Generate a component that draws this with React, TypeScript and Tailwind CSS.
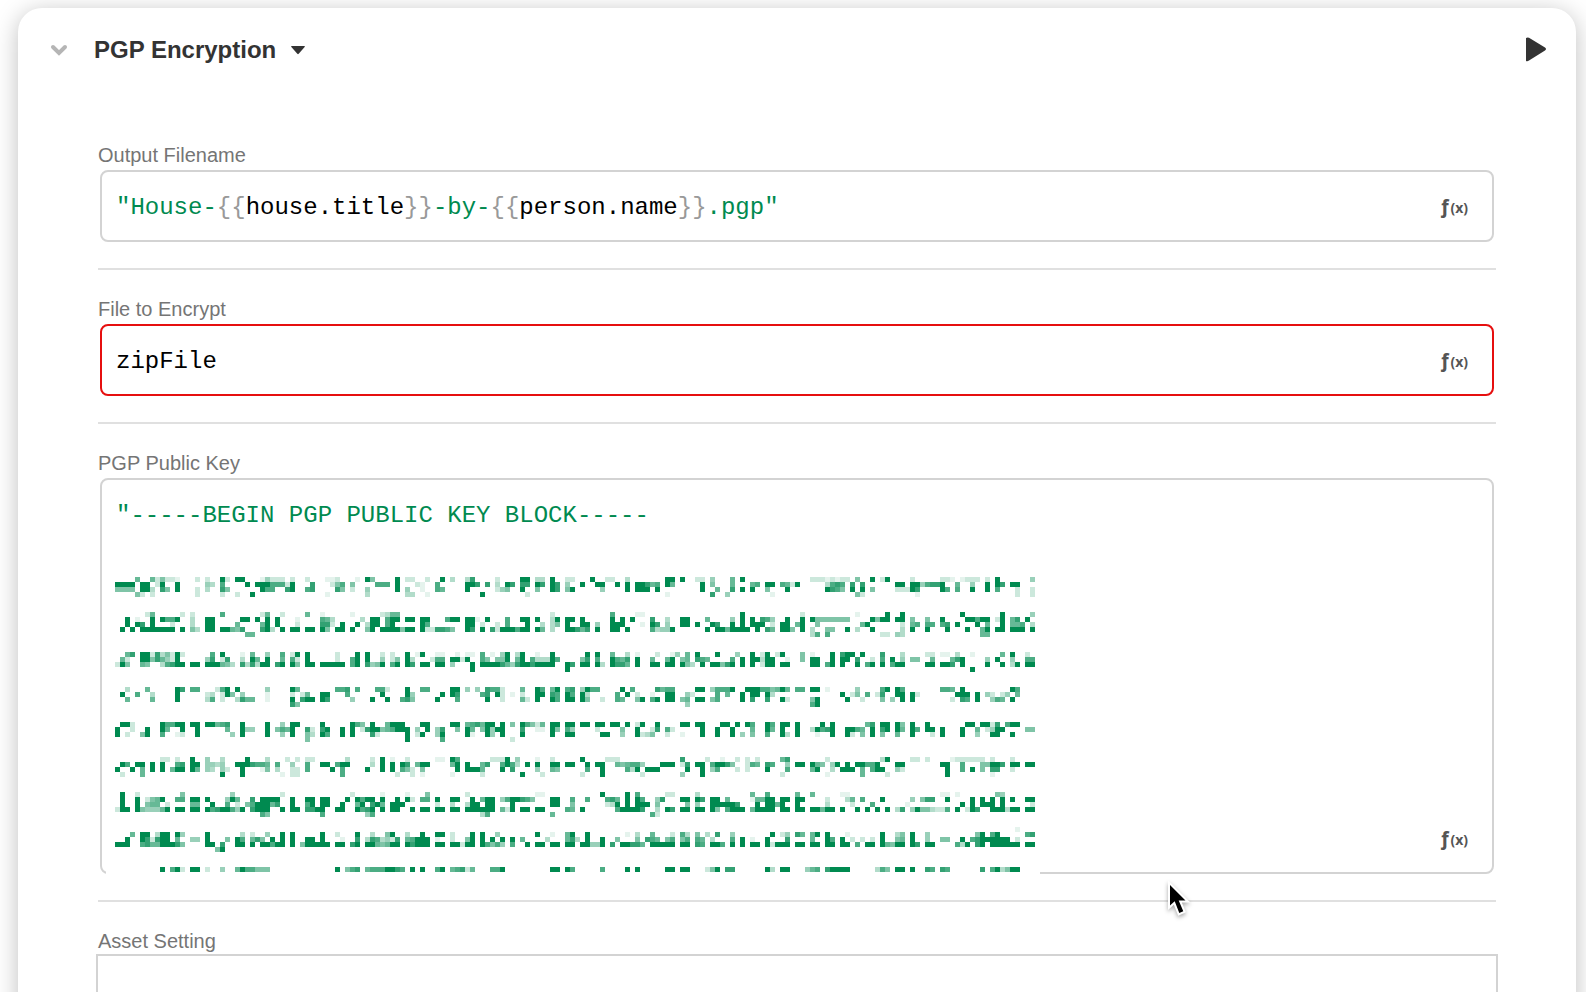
import React, { useState } from 'react';

// Redacted key body. Each row is [grid row, left part, middle part, right part],
// each part is a list of "column:levels" runs, 1 (faint) to 9 (solid).
const CELL = 5;
const PART_OFFSETS = [0, 61, 125];
const REDACTED: [number, string, string, string][] = [
  [0, '4:6 7:6 8:2 9:5 10:221 16:2 18:2 21:92 24:99 29:14222 35:2 38:2 42:11 44:2 48:1 50:95 56:9 58:22', '1:2 4:9 6:3 9:38 15:2 20:99 23:33 26:9 29:22 34:9 37:22 41:3 49:99 52:9 55:22 58:4 62:6', '0:9 14:22212 19:122 23:5 26:9 28:29 34:2 40:221 44:1222 49:2 51:9 58:4'],
  [1, '0:9999 5:99 8:29 12:9 18:43 21:7 26:9 28:9997772 35:9 39:8 43:257 47:5 52:777 56:9 60:2', '0:1 3:7 9:998 13:8 15:3 17:98 20:88 23:98 26:98 29:4 32:9 35:99 39:9 41:9 43:99867 49:96 56:9 58:5 62:6', '2:67 5:99 8:762 11:9 17:378 20:7 22:8 24:8 31:99 34:99 36:4788 40:9 43:6 46:4 49:9 51:98 54:99'],
  [2, '0:5555 5:993 9:85 12:9 16:2 18:3 21:85 29:977 34:89 38:78 44:85 47:2 50:4 56:9 58:4', '0:1 3:76 9:9 15:245 20:9 23:5 26:98 29:59 36:4 41:9 43:999 47:9 56:9 59:6 62:8 64:9', '0:7 2:9 5:5 9:9 17:987 20:5 22:9 24:9 26:5 31:222 34:98 40:97 43:7 46:9 49:9 51:7 55:2 58:2'],
  [3, '4:5 5:2 7:2 16:2 21:2 24:2 27:9 42:1 50:3 58:33', '1:1 12:9 21:2 49:1 58:8 61:4', '6:1 23:52 35:1 55:2 58:2'],
  [7, '6:26 13:2 15:2 21:7 29:26 33:2 38:6 41:1 47:1 53:2366', '26:2 38:7 43:11', '0:9 12:2 23:1 29:9 32:9 44:9 52:9 58:4'],
  [8, '2:9 4:1 7:9 9:977 12:9 15:3 18:99 25:99 28:9 30:9 32:9 36:1 41:76 43:3 49:3 51:99 54:79 56:9 58:99', '0:99 5:799 9:99 11:1 13:9 17:7 20:99 23:9 26:39 29:99 32:9 38:9 40:9 42:9 46:8 49:3 52:99 57:6 62:4', '0:9 2:9 4:87 6:4 9:9 12:9 14:95555555 26:9599 31:99 34:5 37:5 40:9 45:99 47:7 48:99 51:2 52:9 54:68 57:9'],
  [9, '2:9 4:98 7:9 11:2 15:3 18:99 24:6 29:69 32:9 36:2 41:882 45:9 48:9 50:399 54:79', '0:97 9:99 12:2 15:2 17:7 21:9 24:3 26:35 29:9 32:99 35:4 38:99 40:9 44:1 46:98 49:4 52:99 55:9 58:98 62:9', '0:9 2:999 6:2 8:99 11:69 15:5 24:69 32:2 34:67 37:77 40:78 43:9 47:9 49:6 52:9 54:667 58:3'],
  [10, '1:9 3:9 5:9999 8:4 9:999 13:9 15:53 18:99 21:99 23:658 29:89 31:3 33:9 35:99 38:99 41:95 44:99 47:9 50:59 53:9999 57:5 58:99', '0:9 1:22 3:8875 9:98 12:9 14:8299 18:9799 23:96 26:3 29:99 31:868 35:9 38:99 41:9 46:7344 50:9 57:9 59:9969 63:9', '0:99 3:9 5:86 8:99 12:9 10:5 14:3 17:55 21:9 23:3 26:9 32:3 34:9 37:9 41:9 45:9 48:69 51:99 54:99 56:9 58:9'],
  [11, '26:66', '', '14:37 17:7 28:22 31:43 48:66'],
  [15, '2:68 5:99 7:283 10:52 12:92 19:7 21:9 25:1 27:6 30:4 33:7 35:2 36:9 38:9 44:2 48:9 50:9 53:2 55:2 58:9 60:1', '0:9 3:11 7:1 9:11 12:7 14:1 16:49 19:39 23:1 26:9 33:9 35:9 38:6 41:3 43:1 47:2 50:14 53:6 55:9 59:9 63:4', '2:9 4:29 7:29 12:5 14:1 18:9 20:899 24:9 28:8 32:3 37:22 40:11 43:3 46:1 52:6 54:9 57:2'],
  [16, '1:62 5:99 7:58 9:642 12:9 18:48 21:28 25:3 27:96 30:9 33:6 35:72 38:9 44:2 47:79 50:9 53:4 55:25 58:93', '2:277 6:99 8:29 12:75 15:559 19:69 22:733 25:39 27:7 32:58 35:7 38:9768 43:9 46:6 49:69 52:56 55:876 62:7', '0:9 2:99 4:399 9:1 12:5 14:99 18:9 20:99 23:8 26:2 28:7 30:9 32:4 34:55 38:6 42:689 49:4 51:9 54:4 57:77'],
  [17, '0:2 1:95 5:65 9:37 11:899 15:99 18:999 21:653 25:83 27:83 29:99 32:89 35:95 38:99 41:999 44:99 47:79 50:8459 55:79 58:98', '0:99 3:99 6:4 10:9 12:9999 16:8648 20:99 22:89999 29:98 32:99 35:93 38:9886 43:9 46:99 49:99 52:953 56:9 58:99 60:58 62:9', '0:9 2:9 4:299 8:99 14:99 17:79 20:9 23:9 25:79 28:9 30:79 32:9 37:99 40:998 44:9 49:9 52:9 54:39 57:99'],
  [18, '', '10:9 29:9', '46:9'],
  [22, '2:3 6:6 12:98 15:77 20:27 22:9 24:9 30:4 35:96 44:778 48:7 52:77 54:2 58:9', '0:77 6:99 9:4 11:4 13:877 16:2 20:6 23:97 26:69 29:78 32:4977 40:9 42:7 47:8677 55:99 58:47779', '1:9997 5:7564 8:96 11:77 14:99 17:1 23:4 28:79 31:97 40:776 44:9 54:97'],
  [23, '1:9 4:7 7:3 12:9 18:23 21:2 22:95 25:4 30:1 35:2 37:26 41:99 46:7 53:9 58:94', '4:9 6:98 12:78 15:92 18:1 20:2 23:99 26:87 29:97 32:93 39:7 41:9 43:2 46:1 49:99 53:42 59:7 61:6', '0:9 2:99 5:93 20:9 22:25 25:7 27:28 31:99 34:92 43:999 47:9 49:42 52:24 55:6'],
  [24, '2:6 7:6 12:9 18:37 21:2 24:386 27:6 30:1 35:9 37:899 41:98 47:4 51:9 54:9 57:785', '3:9 7:7 13:9 16:2 20:62 23:9 26:97 29:99 32:95 36:2 39:76 43:59 46:79 49:99 52:56 55:99 58:57', '0:9 2:8 5:8 8:92 14:59 21:9 24:2 28:5 30:4 32:9 34:9 42:2 44:87 47:9 50:476 54:9'],
  [25, '35:85', '53:4', '14:79'],
  [29, '1:992 9:97799 15:99 18:99678 25:9 30:9 33:4 35:99 41:9 47:975 51:9 54:6999 61:9', '0:99 6:99 9:678699 16:9 18:5 20:97 22:52 24:6 26:99 29:99 32:99 35:99 38:99 41:9 43:29 47:9 52:99 55:99 60:99 63:9', '1:97 5:97 8:99 11:9 16:9 18:9 25:68 28:99 31:95 34:9 37:9 45:99 48:99 50:28 53:79 55:9'],
  [30, '0:9 3:2 6:9 9:96 13:9 16:9 22:6 25:9 26:44 30:9 32:576 35:9 38:82 41:89 45:9 47:9 49:2899 53:56 55:7999 60:4', '1:9 3:48 7:5 9:96 12:5949 16:9 20:8 23:11 26:95 29:74 35:2 40:5 43:9 46:28 49:72 56:9 59:9 62:9', '2:6 5:96 8:9 11:9 14:39 16:78 18:9 21:99 23:76 26:9 28:89 31:96 34:97 37:99 40:9 44:9 47:6 49:2499 57:55'],
  [31, '0:9 2:2 5:59 9:7 12:1 13:2 16:9 23:4 25:9 30:9 33:4 35:9 38:53 41:97 45:9 47:9 51:82 58:9 60:29', '0:9 3:49 9:91 13:94 16:9 20:9 26:9 29:99 36:99 40:4 43:92 45:35 49:2 52:1 56:9 59:9 62:9', '0:4 2:5 5:7 8:93 11:9 15:1 18:9 21:92 24:5 26:9 28:5 31:6 34:9 38:2 40:9 44:9 47:4 50:99 54:9'],
  [32, '38:5 58:9', '4:7 18:2', ''],
  [36, '9:22 12:2 15:9 18:4 21:3 26:9 30:3 34:2 36:2 38:22 46:3 51:2 53:9 55:1 58:2', '3:11 6:97 14:222 17:9 19:4 23:1 26:2 32:9 37:222 52:8 57:2 60:1 63:2', '1:2 3:2 8:68 17:2 28:39 34:22 37:2 42:12222 47:22 50:2 54:2'],
  [37, '1:97 4:99 7:9 9:9 12:78 15:99 18:443 21:4 24:9998 28:776 32:7 35:4 38:7 41:99 44:799 51:3 53:9 55:9 57:98 60:6', '0:99 6:69 9:9 12:68 16:79 18:73 21:9 23:9 26:99 29:99 33:9 35:99 39:656774 48:999 52:28 55:99 58:79985', '1:276 5:87 9:4 11:99 14:965 18:49 21:9 23:99779 31:99 40:99 44:7 48:559 51:98 54:99 57:99'],
  [38, '0:9 3:9 5:6 7:9 9:9 11:699 15:96 18:43 21:42 25:9 29:15 32:3 35:22 38:7 43:9 45:7 50:9 53:9 55:9 57:75 59:2', '0:5 7:9 9:999 12:6 16:9 18:8 23:4 26:65 33:7 36:9 41:73 43:9 45:999 53:9 56:9 58:47 63:2', '1:2 5:9 9:7 14:69 18:3 20:999 24:6 26:79 28:9 31:42 41:9 44:7 46:9 48:5 50:88 54:2'],
  [39, '1:2 5:6 21:9 25:9 33:1 35:22 45:7 56:2 59:2', '0:1 6:1 12:2 20:9 24:2 32:2 36:9 44:2 52:4 56:9', '8:2 17:1 24:6 29:2 41:9 50:1'],
  [43, '1:9 4:2 13:5 23:4 33:2 47:2 53:1 58:1', '1:5 9:2 23:11 36:9 41:9 43:7 49:22 55:3', '2:6 5:7 11:6 14:6 20:11 40:11 43:1 51:54'],
  [44, '1:9 4:9 6:2569 12:77 15:99 18:9 22:49 24:6 27:8 29:999 32:9 35:9 38:99 41:99 46:9 48:97 50:99 53:9 56:9 58:92', '0:77 3:9 6:99 10:9 12:699 16:4799875 26:99 30:7 33:7 37:786 41:9 43:97 47:46 48:6 52:99 55:98 58:99 61:6', '2:1669 5:99 8:99 11:99 17:2 21:36 24:7 28:9 34:4 36:588 41:9 46:9 48:9 50:9 52:9 54:9 57:99'],
  [45, '1:9 4:9 6:566 10:2 15:66 19:9 22:7 24:2 26:579 29:996 32:8 35:9 38:79 41:99 45:9 48:69 51:89 53:6 55:999', '3:2 6:3 9:39 11:9 13:99 18:9 26:99 30:5 37:23 39:9 41:9 43:99 45:9 47:5 53:5 55:4 58:99 60:9998', '3:9 5:99 7:69 11:9 17:3 22:2 26:7 33:1 44:9 46:9 48:999 52:9 58:2'],
  [46, '0:2 1:99 4:95444 9:69 12:99 15:99 18:9789974 25:9 27:8999 33:9 35:99 38:889 41:9 44:99 48:978 51:9 53:9 55:99 59:9', '0:99 3:99 6:99 9:99 11:9999 16:62 18:9 20:99 23:99 29:76 32:9 39:79999 44:8 47:3 49:98 52:99 55:99 58:95 61:799', '0:9 2:699 5:99 8:99 11:99 14:99699 20:9 23:9 25:9 27:9 29:9 31:38 34:4955 38:3227 43:9 45:29 47:8 50:999 53:39 55:9 57:99'],
  [47, '29:75 41:7 50:47', '12:37 26:6 46:72', ''],
  [50, '', '', '55:1'],
  [51, '3:6 5:99 8:39 10:9 12:94 18:9 25:3 27:2 30:4 33:9 35:9 41:9 44:2 48:9 51:3 54:59 58:3', '0:9 3:99 6:2 10:9 12:9 15:4 23:9 26:1 29:69 33:9 41:1 43:3 46:6 50:2 52:73 55:5 57:3 59:8 62:4', '6:9 8:24 11:86 14:69 17:9 21:1 28:9 31:35 34:9 37:4 47:59 50:7 51:9 57:78'],
  [52, '2:9 5:98 7:2899 12:6 15:44 18:9 22:5 24:97 27:68 29:5 31:9 33:9 35:9 38:99 41:9 45:1 48:8 50:387 53:34 55:28 58:679', '0:99 3:1 6:2 9:59 12:9 14:9 16:9 18:9 20:6 25:3 29:68 31:3 33:9 36:9 39:5 43:5 45:87 47:6 49:57 52:57 55:76 58:3 62:7', '0:9 2:1 5:9 9:8 14:6 17:97 20:9 22:2 24:2 26:2 28:9 31:56 34:9 37:4 40:55 44:9 46:78 48:999999 55:2'],
  [53, '0:999 5:786 8:6999 12:85 18:99 21:8 24:99 27:9 29:99 31:79 33:9 35:9 37:5999 41:99 44:99 47:89 50:996 53:56 55:99 58:989', '0:99 3:99 6:992 9:99 12:97574 18:7 21:9 23:99 26:99 29:99 32:9944 36:9 38:8 40:99886 46:999 49:99 52:99 55:87 58:99 60:7 62:9', '0:9 2:99 5:92 7:999 11:99 14:99 17:99 20:99 23:7 25:99 28:96 30:599 34:98 37:99 43:73 45:9 47:89 50:999999 57:99'],
  [54, '20:59', '', ''],
  [58, '9:9 11:79 13:2 15:99 18:2 21:4 24:6977555 44:9 46:578 50:67779987 59:9', '0:9 3:79 6:6782 10:6 14:779 26:99 29:97 36:7 41:9 43:9 49:99 52:99 57:25 59:9 61:88', '5:93 8:99 13:467 17:8999 21:9 27:375 31:99 34:9 37:87 40:87 48:8 50:7935 54:99'],
];

const RedactedKey: React.FC = () => (
  <svg
    width="934"
    height="306"
    className="absolute left-1 top-[92px] pointer-events-none"
    shapeRendering="crispEdges"
    aria-hidden="true"
  >
    <rect width="934" height="306" fill="#fff" />
    {REDACTED.map(([row, ...parts]) =>
      parts.map((part, p) =>
        part.split(' ').filter(Boolean).map((run) => {
          const [start, levels] = run.split(':');
          return levels.split('').map((level, i) => (
            <rect
              key={`${row}-${p}-${start}-${i}`}
              x={9 + (PART_OFFSETS[p] + Number(start) + i) * CELL}
              y={5 + row * CELL}
              width={CELL}
              height={CELL}
              fill="#008a50"
              fillOpacity={level === '9' ? 1 : Number(level) * 0.1}
            />
          ));
        })
      )
    )}
  </svg>
);

const FormulaButton: React.FC = () => (
  <button
    type="button"
    aria-label="Insert formula"
    className="flex h-[68px] shrink-0 cursor-pointer items-center pr-6 font-['Open_Sans',sans-serif] font-bold text-[#555]"
  >
    <span className="text-xl leading-7">ƒ</span>
    <span className="pt-1 text-sm leading-7">(x)</span>
  </button>
);

interface FieldProps {
  id: string;
  label: string;
  children: React.ReactNode;
}

const Field: React.FC<FieldProps> = ({ id, label, children }) => (
  <div className="relative border-b-2 border-[#e0e0e0] pb-[26px]">
    <label htmlFor={id} className="block pt-[25px] pb-px text-xl leading-7 text-[#757575]">
      {label}
    </label>
    {children}
  </div>
);

const Highlighted: React.FC<{ value: string }> = ({ value }) => (
  <>
    {value.split(/(\{\{|\}\})/).map((part, i, all) => {
      if (part === '{{' || part === '}}') {
        return <span key={i} className="text-[#999]">{part}</span>;
      }
      return <span key={i} className={all[i - 1] === '{{' ? 'text-black' : 'text-[#008a50]'}>{part}</span>;
    })}
  </>
);

const App: React.FC = () => {
  const [filename, setFilename] = useState('"House-{{house.title}}-by-{{person.name}}.pgp"');
  const [file, setFile] = useState('zipFile');
  const [publicKey, setPublicKey] = useState('"-----BEGIN PGP PUBLIC KEY BLOCK-----');
  const [asset, setAsset] = useState('');

  return (
    <div className="h-screen overflow-hidden bg-white pt-2 pr-[10px] pl-[18px] font-['Liberation_Sans',Arial,sans-serif]">
      <main className="min-h-full rounded-t-3xl bg-white shadow-[0_4px_24px_rgba(0,0,0,0.25)]">
        <header className="flex h-[84px] items-center pr-[30px] pl-8">
          <button type="button" aria-label="Collapse step" className="cursor-pointer">
            <svg width="18" height="14" viewBox="0 0 18 14" fill="none" stroke="#b5b5b5" strokeWidth="4">
              <path d="M3 4 L9 10 L15 4" strokeLinecap="round" />
            </svg>
          </button>
          <h1 className="ml-[26px] text-2xl leading-8 font-bold text-[#333]">PGP Encryption</h1>
          <button type="button" aria-label="Step options" className="ml-[15px] cursor-pointer">
            <svg width="14" height="9" viewBox="0 0 14 9" fill="#333">
              <path d="M0.6 0 H13.4 Q14.2 0.3 13.6 1 L7.7 7.8 Q7 8.5 6.3 7.8 L0.4 1 Q-0.2 0.3 0.6 0 Z" />
            </svg>
          </button>
          <button type="button" aria-label="Run step" className="ml-auto cursor-pointer">
            <svg width="20" height="26" viewBox="0 0 20 26" fill="#333">
              <path d="M0 1 Q1.5 0 3 0.8 L19 10.6 Q21 12 19 13.4 L3 23.6 Q1.5 24.6 0 24 Z" />
            </svg>
          </button>
        </header>

        <form className="pt-6 pr-20 pl-20">
          <Field id="filename" label="Output Filename">
            <div className="mx-[2px] flex rounded-lg border-2 border-[#d3d3d3] font-['Liberation_Mono',monospace] text-2xl">
              <div className="relative h-[68px] flex-1">
                <div aria-hidden="true" className="px-[14px] pt-[18px] leading-9 whitespace-pre">
                  <Highlighted value={filename} />
                </div>
                <input
                  id="filename"
                  value={filename}
                  onChange={(e) => setFilename(e.target.value)}
                  className="absolute inset-0 w-full px-[14px] pt-[2px] text-transparent caret-black outline-none"
                />
              </div>
              <FormulaButton />
            </div>
          </Field>

          <Field id="file" label="File to Encrypt">
            <div className="mx-[2px] flex rounded-lg border-2 border-[#e60f0f] font-['Liberation_Mono',monospace] text-2xl">
              <input
                id="file"
                value={file}
                onChange={(e) => setFile(e.target.value)}
                className="h-[68px] flex-1 px-[14px] pt-[2px] text-black outline-none"
              />
              <FormulaButton />
            </div>
          </Field>

          <Field id="public-key" label="PGP Public Key">
            <div className="relative mx-[2px] flex items-end rounded-lg border-2 border-[#d3d3d3] font-['Liberation_Mono',monospace] text-2xl">
              <textarea
                id="public-key"
                value={publicKey}
                onChange={(e) => setPublicKey(e.target.value)}
                spellCheck={false}
                className="block h-[392px] flex-1 resize-none px-[14px] py-[18px] leading-9 text-[#008a50] outline-none"
              />
              <RedactedKey />
              <FormulaButton />
            </div>
            <svg
              width="28"
              height="40"
              viewBox="-4 -4 28 40"
              className="pointer-events-none absolute bottom-[-21px] left-[1068px] drop-shadow-[0_2px_2px_rgba(0,0,0,0.35)]"
              aria-hidden="true"
            >
              <path
                d="M0 0 V20.5 L4.7 16.2 L9.3 28 L13.3 26.3 L8.7 15.4 H15.5 Z"
                fill="#000"
                stroke="#fff"
                strokeWidth="4"
                paintOrder="stroke"
              />
            </svg>
          </Field>

          <div>
            <label htmlFor="asset" className="block pt-[25px] text-xl leading-7 text-[#757575]">
              Asset Setting
            </label>
            <div className="mx-[-2px] -mt-px flex border-2 border-[#d3d3d3]">
              <input
                id="asset"
                value={asset}
                onChange={(e) => setAsset(e.target.value)}
                className="h-[68px] flex-1 px-4 text-xl outline-none"
              />
            </div>
          </div>
        </form>
      </main>
    </div>
  );
};

export default App;
